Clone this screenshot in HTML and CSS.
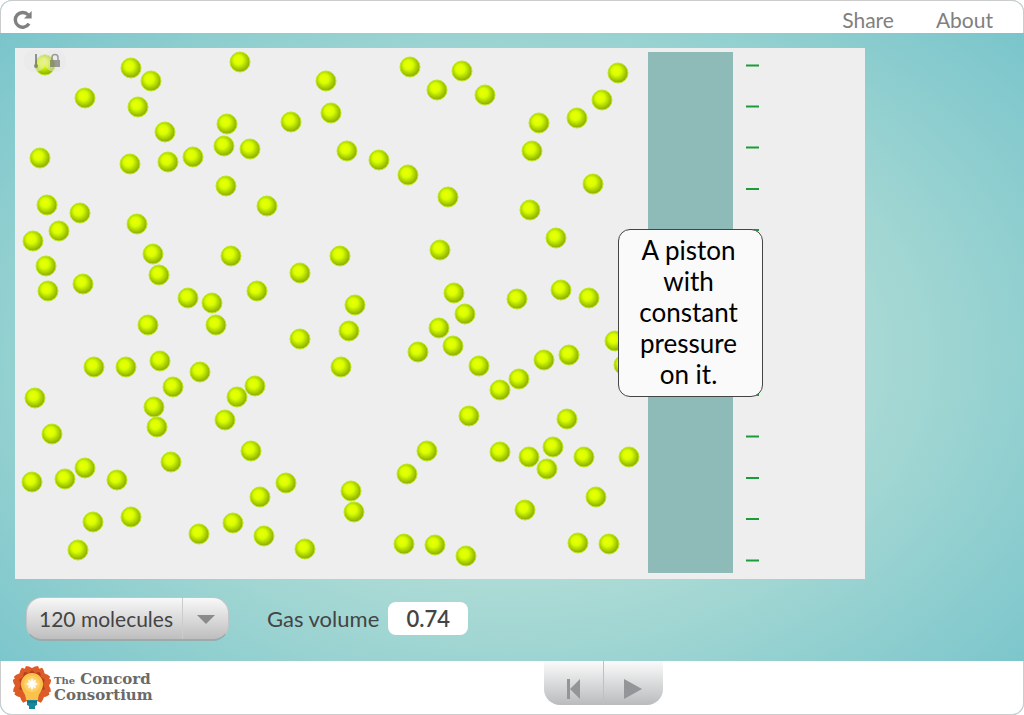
FILE: index.html
```html
<!DOCTYPE html>
<html lang="en">
<head>
<meta charset="utf-8">
<title>Gas volume</title>
<link rel="stylesheet" href="styles.css">
</head>
<body>
<div class="frame">
  <header class="topbar">
    <button class="reload" type="button" aria-label="Reload">
      <svg width="20" height="20" viewBox="0 0 20 20"><path d="M16 13.700A7.400 7.400 0 1 1 15.300 5" fill="none" stroke="#808080" stroke-width="3.400"/><path d="M18.600 1v7.600h-7.600z" fill="#808080"/></svg>
    </button>
    <nav class="links"><a href="#share">Share</a><a href="#about">About</a></nav>
  </header>
  <main class="content">
    <div class="stage">
      <svg class="model" viewBox="15 48 850 531" role="img" aria-label="Gas molecules and piston">
        <defs>
          <radialGradient id="atom" cx=".46" cy=".44" r=".57" fx=".38" fy=".36">
            <stop offset="0" stop-color="#f2ff00"/><stop offset=".4" stop-color="#d6ff00"/><stop offset=".9" stop-color="#94b400"/><stop offset="1" stop-color="#94b400"/>
          </radialGradient>
        </defs>
        <g class="atoms">
          <circle cx="45" cy="65" r="10"/><circle cx="131" cy="68" r="10"/><circle cx="151" cy="81" r="10"/><circle cx="240" cy="62" r="10"/><circle cx="85" cy="98" r="10"/><circle cx="138" cy="107" r="10"/><circle cx="326" cy="81" r="10"/><circle cx="331" cy="113" r="10"/><circle cx="291" cy="122" r="10"/><circle cx="227" cy="124" r="10"/>
          <circle cx="165" cy="132" r="10"/><circle cx="224" cy="146" r="10"/><circle cx="250" cy="149" r="10"/><circle cx="40" cy="158" r="10"/><circle cx="130" cy="164" r="10"/><circle cx="168" cy="162" r="10"/><circle cx="193" cy="157" r="10"/><circle cx="226" cy="186" r="10"/><circle cx="267" cy="206" r="10"/><circle cx="347" cy="151" r="10"/>
          <circle cx="379" cy="160" r="10"/><circle cx="408" cy="175" r="10"/><circle cx="448" cy="197" r="10"/><circle cx="410" cy="67" r="10"/><circle cx="462" cy="71" r="10"/><circle cx="437" cy="90" r="10"/><circle cx="485" cy="95" r="10"/><circle cx="618" cy="73" r="10"/><circle cx="602" cy="100" r="10"/><circle cx="577" cy="118" r="10"/>
          <circle cx="539" cy="123" r="10"/><circle cx="532" cy="151" r="10"/><circle cx="593" cy="184" r="10"/><circle cx="530" cy="210" r="10"/><circle cx="556" cy="238" r="10"/><circle cx="47" cy="205" r="10"/><circle cx="80" cy="213" r="10"/><circle cx="59" cy="231" r="10"/><circle cx="33" cy="241" r="10"/><circle cx="46" cy="266" r="10"/>
          <circle cx="48" cy="291" r="10"/><circle cx="83" cy="284" r="10"/><circle cx="137" cy="224" r="10"/><circle cx="153" cy="254" r="10"/><circle cx="159" cy="275" r="10"/><circle cx="231" cy="256" r="10"/><circle cx="188" cy="298" r="10"/><circle cx="212" cy="303" r="10"/><circle cx="257" cy="291" r="10"/><circle cx="300" cy="273" r="10"/>
          <circle cx="340" cy="256" r="10"/><circle cx="355" cy="305" r="10"/><circle cx="349" cy="331" r="10"/><circle cx="300" cy="339" r="10"/><circle cx="148" cy="325" r="10"/><circle cx="216" cy="325" r="10"/><circle cx="341" cy="367" r="10"/><circle cx="440" cy="250" r="10"/><circle cx="454" cy="293" r="10"/><circle cx="465" cy="314" r="10"/>
          <circle cx="439" cy="328" r="10"/><circle cx="453" cy="346" r="10"/><circle cx="418" cy="352" r="10"/><circle cx="479" cy="366" r="10"/><circle cx="517" cy="299" r="10"/><circle cx="561" cy="290" r="10"/><circle cx="589" cy="298" r="10"/><circle cx="615" cy="341" r="10"/><circle cx="624" cy="365" r="10"/><circle cx="569" cy="355" r="10"/>
          <circle cx="544" cy="360" r="10"/><circle cx="519" cy="379" r="10"/><circle cx="500" cy="390" r="10"/><circle cx="94" cy="367" r="10"/><circle cx="126" cy="367" r="10"/><circle cx="160" cy="361" r="10"/><circle cx="200" cy="372" r="10"/><circle cx="173" cy="387" r="10"/><circle cx="154" cy="407" r="10"/><circle cx="157" cy="427" r="10"/>
          <circle cx="237" cy="397" r="10"/><circle cx="255" cy="386" r="10"/><circle cx="225" cy="420" r="10"/><circle cx="35" cy="398" r="10"/><circle cx="52" cy="434" r="10"/><circle cx="251" cy="451" r="10"/><circle cx="171" cy="462" r="10"/><circle cx="85" cy="468" r="10"/><circle cx="65" cy="479" r="10"/><circle cx="32" cy="482" r="10"/>
          <circle cx="117" cy="480" r="10"/><circle cx="131" cy="517" r="10"/><circle cx="93" cy="522" r="10"/><circle cx="78" cy="550" r="10"/><circle cx="199" cy="534" r="10"/><circle cx="233" cy="523" r="10"/><circle cx="260" cy="497" r="10"/><circle cx="286" cy="483" r="10"/><circle cx="264" cy="536" r="10"/><circle cx="305" cy="549" r="10"/>
          <circle cx="351" cy="491" r="10"/><circle cx="354" cy="512" r="10"/><circle cx="407" cy="474" r="10"/><circle cx="427" cy="451" r="10"/><circle cx="469" cy="416" r="10"/><circle cx="404" cy="544" r="10"/><circle cx="435" cy="545" r="10"/><circle cx="466" cy="556" r="10"/><circle cx="500" cy="452" r="10"/><circle cx="529" cy="457" r="10"/>
          <circle cx="553" cy="447" r="10"/><circle cx="547" cy="469" r="10"/><circle cx="567" cy="419" r="10"/><circle cx="584" cy="457" r="10"/><circle cx="629" cy="457" r="10"/><circle cx="596" cy="497" r="10"/><circle cx="525" cy="510" r="10"/><circle cx="578" cy="543" r="10"/><circle cx="609" cy="544" r="10"/>
        </g>
        <path d="M648 52h85v521h-85z" fill="#8ebab7"/>
        <path d="M746 65.500h13M746 106.500h13M746 147.500h13M746 189h13M746 230h13M746 271.500h13M746 312.500h13M746 354h13M746 395h13M746 436.500h13M746 478h13M746 519h13M746 560.500h13" stroke="#1b9b3a" stroke-width="2"/>
        <g class="status">
          <circle cx="35" cy="61" r="11" fill="#e8e8e8" opacity=".5"/><circle cx="55" cy="61" r="11" fill="#e8e8e8" opacity=".5"/>
          <g opacity=".6"><path d="M36 54v12" stroke="#555" stroke-width="2"/><circle cx="36" cy="66" r="2" fill="#555"/>
          <path d="M50 60h10v7H50z" fill="#666"/><path d="M52 60v-2.500a3 3 0 0 1 6 0V60" fill="none" stroke="#666" stroke-width="1.500"/></g>
        </g>
      </svg>
      <div class="note">A piston with constant pressure on it.</div>
    </div>
    <div class="controls">
      <div class="picker">
        <select aria-label="Number of molecules"><option>120 molecules</option></select>
        <svg class="arrow" width="18" height="9" viewBox="0 0 18 9"><path d="M0 0h18l-9 9z" fill="#8a8a8a"/></svg>
      </div>
      <div class="reading">
        <label for="volume">Gas volume</label>
        <output id="volume">0.74</output>
      </div>
    </div>
  </main>
  <footer class="bottombar">
    <a class="brand" href="#concord" aria-label="The Concord Consortium">
      <svg width="40" height="46" viewBox="0 0 40 46">
        <g fill="#dc5b27"><circle cx="20" cy="20" r="14"/><path id="petal" d="M20 21L12 9Q12 4 14 1Q17 1 20 3Q23 1 26 1Q28 4 28 9z"/><use href="#petal" transform="rotate(48 20 20)"/><use href="#petal" transform="rotate(92 20 20)"/><use href="#petal" transform="rotate(136 20 20)"/><use href="#petal" transform="rotate(-48 20 20)"/><use href="#petal" transform="rotate(-92 20 20)"/><use href="#petal" transform="rotate(-136 20 20)"/></g>
        <path d="M20 5l3 3 5-1 1 5 4 3-2 4 2 5-5 2-1 5H13l-1-5-5-2 2-5-2-4 4-3 1-5 5 1z" fill="#b5401f"/>
        <path d="M20 8a11 11 0 0 0-11 11c0 7 5 9 5 16h12c0-7 5-9 5-16A11 11 0 0 0 20 8z" fill="#fbc14b"/>
        <circle cx="20" cy="19" r="8" fill="#fdd066"/><circle cx="20" cy="19" r="5" fill="#fee6a8"/>
        <path d="M20 12l1 4.500 3-2-1.500 3.500 4.500 1-4.500 1 1.500 3.500-3-2L20 26l-1-4.500-3 2 1.500-3.500-4.500-1 4.500-1-1.500-3.500 3 2z" fill="#fff"/>
        <path d="M15 35h10v5l-2 1v3h-6v-3l-2-1z" fill="#16889b"/><path d="M15 37h10" stroke="#0c6679"/>
      </svg>
      <span class="brandname"><span><small>The</small> Concord</span><span>Consortium</span></span>
    </a>
    <div class="player">
      <button type="button" aria-label="Back to start"><svg width="14" height="20" viewBox="0 0 14 20"><path d="M1 0h3v20H1zM14 0v20L4 10z" fill="#939598"/></svg></button>
      <button type="button" aria-label="Play"><svg width="18" height="20" viewBox="0 0 18 20"><path d="M0 0l18 10L0 20z" fill="#939598"/></svg></button>
    </div>
  </footer>
</div>
</body>
</html>
```
FILE: styles.css
```css
* { box-sizing: border-box; }
body {
  margin: 0;
  font-family: Lato, "Liberation Sans", sans-serif;
  font-size: 21px;
  color: #444;
  background: #fff;
}
.frame {
  min-height: 100vh;
  display: flex;
  flex-direction: column;
  border-radius: 12px;
  background: radial-gradient(ellipse farthest-corner at center, #d9eede, #75c3ca);
}
.topbar {
  height: 33px;
  padding: 5px 30px 0 12px;
  display: flex;
  justify-content: space-between;
  align-items: center;
  background: #fff;
  border: 1px solid #ccc;
  border-bottom: 0;
  border-radius: 12px 12px 0 0;
}
.reload { padding: 0; border: 0; background: none; display: flex; }
.links { display: flex; gap: 42px; }
.links a { color: #808080; text-decoration: none; }
.content { flex: 1; padding: 15px 15px 0; }
.stage {
  position: relative;
  max-width: 850px;
  background: #eee;
}
.model { display: block; width: 100%; }
.atoms { fill: url(#atom); stroke: #bde626; stroke-width: 1px; }
.note {
  position: absolute;
  left: 603px;
  top: 181px;
  width: 145px;
  padding: 5px 20px 6px 16px;
  border: 1px solid #444;
  border-radius: 12px;
  background: #fafafa;
  color: #000;
  font-size: 26px;
  line-height: 31px;
  text-align: center;
}
.controls {
  display: flex;
  align-items: center;
  gap: 38px;
  padding: 18px 11px;
}
.picker { position: relative; }
.picker select {
  appearance: none;
  width: 203px;
  height: 44px;
  padding: 0 0 0 12px;
  border: 1px solid #c4c4c4;
  border-bottom: 2px solid #9aabac;
  border-radius: 16px;
  font: inherit;
  color: #444;
  background: linear-gradient(90deg, transparent 155px, #ccc 155px, #ccc 156px, transparent 156px), linear-gradient(#f8f8f8, #bebebe);
}
.arrow { position: absolute; right: 14px; top: 18px; pointer-events: none; }
.reading { display: flex; align-items: center; gap: 9px; font-size: 22px; margin-bottom: 2px; }
.reading output {
  width: 80px;
  line-height: 33px;
  border-radius: 8px;
  background: #fff;
  text-align: center;
  font-weight: 600;
}
.bottombar {
  height: 54px;
  padding: 0 11px;
  display: grid;
  grid-template-columns: 1fr auto 1fr;
  background: #fff;
  border: 1px solid #ccc;
  border-top: 0;
  border-radius: 0 0 12px 12px;
}
.brand {
  display: flex;
  align-items: center;
  gap: 2px;
  color: #6a6a6a;
  text-decoration: none;
}
.brandname {
  display: flex;
  flex-direction: column;
  font: bold 15px/15px "DejaVu Serif", serif;
}
.brandname small { font-size: 10px; }
.player {
  grid-column: 2;
  display: flex;
  height: 44px;
  margin-left: 182px;
  border-radius: 0 0 16px 16px;
  overflow: hidden;
  background: linear-gradient(#fafbfa, #babbbd);
}
.player button {
  width: 59px;
  padding: 18px 0 0;
  border: 0;
  background: none;
  display: flex;
  justify-content: center;
  align-items: flex-start;
}
.player button + button { width: 60px; border-left: 1px solid #c0c0c0; }
```
